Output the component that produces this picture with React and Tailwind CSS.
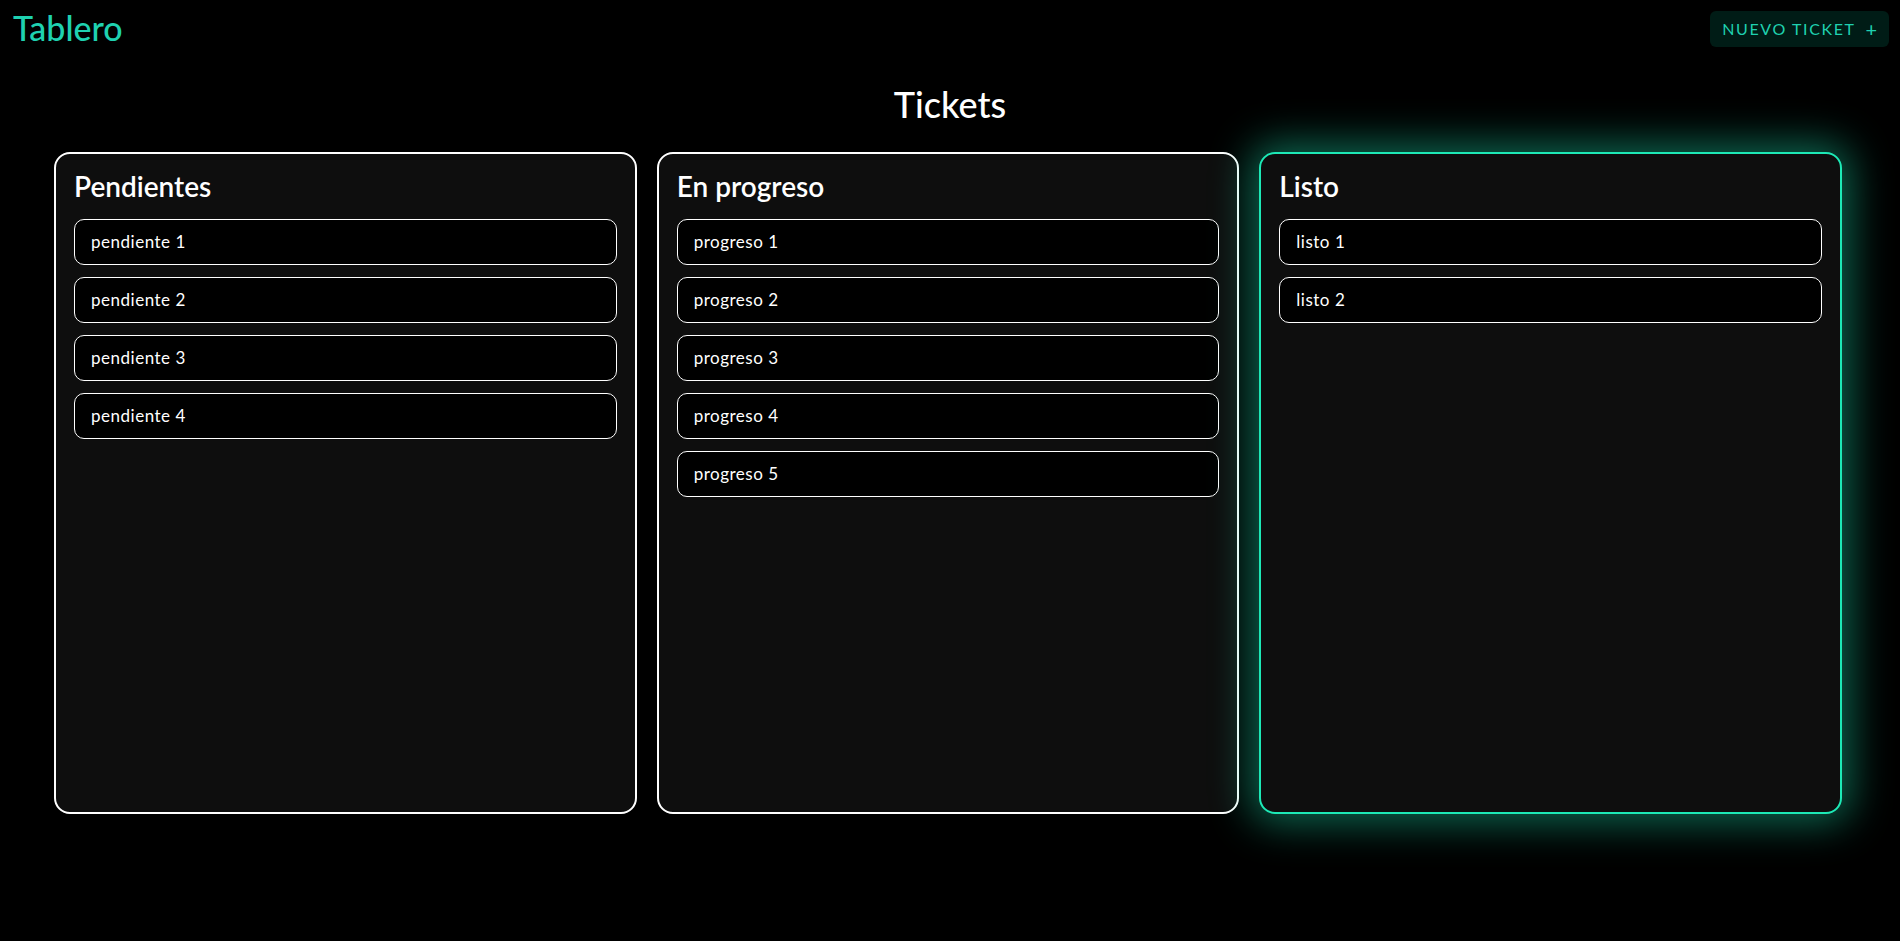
import React from "react";

const columns = [
  { title: "Pendientes", items: ["pendiente 1", "pendiente 2", "pendiente 3", "pendiente 4"] },
  { title: "En progreso", items: ["progreso 1", "progreso 2", "progreso 3", "progreso 4", "progreso 5"] },
  { title: "Listo", items: ["listo 1", "listo 2"], active: true },
];

function Column({ col }) {
  return (
    <div
      className={
        col.active
          ? "h-[662px] rounded-2xl border-2 border-[#1de9b6] bg-[#0e0e0e] px-[18px] pt-[14px] shadow-[0_0_40px_8px_rgba(29,233,182,0.45)]"
          : "h-[662px] rounded-2xl border-2 border-white bg-[#0e0e0e] px-[18px] pt-[14px]"
      }
    >
      <h2 className="text-[28px] font-semibold leading-[36px] text-white">{col.title}</h2>
      <div className="mt-[15px] flex flex-col gap-3">
        {col.items.map((item) => (
          <div
            key={item}
            className="flex h-[46px] items-center rounded-[10px] border border-white bg-black px-4 text-[17px] tracking-[0.03em] text-white"
          >
            {item}
          </div>
        ))}
      </div>
    </div>
  );
}

export default function App() {
  return (
    <div className="min-h-[941px] bg-black text-white" style={{ fontFamily: "Lato, 'Noto Sans', sans-serif" }}>
      {/* header */}
      <header className="flex items-start justify-between pl-[13px] pr-[11px] pt-[11px]">
        <span className="text-[34px] font-medium leading-[34px] text-[#1fd1b0]">Tablero</span>
        <button className="flex h-[36px] w-[179px] items-center justify-center gap-[10px] rounded-md bg-[#001c16] pl-[2px] text-[16px] tracking-[0.1em] text-[#1fd1b0]">
          NUEVO TICKET
          <span className="text-[20px] leading-none">+</span>
        </button>
      </header>

      <h1 className="mt-[36px] text-center text-[36px] font-medium leading-[42px] text-white">Tickets</h1>

      <div className="mt-[27px] grid grid-cols-3 gap-5 pl-[54px] pr-[58px]">
        {columns.map((col) => (
          <Column key={col.title} col={col} />
        ))}
      </div>
    </div>
  );
}
